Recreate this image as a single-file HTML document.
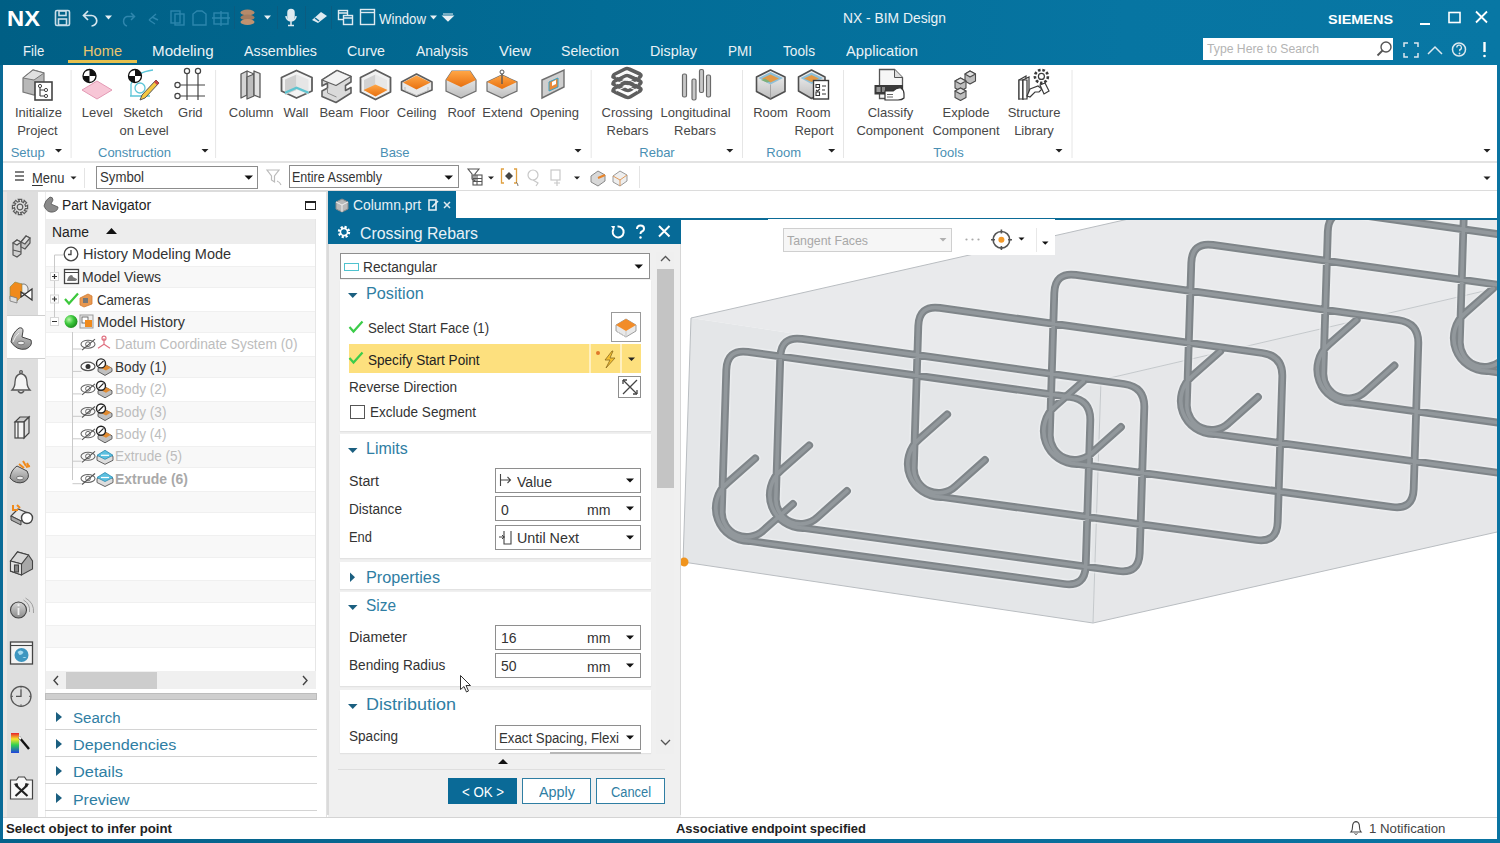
<!DOCTYPE html>
<html><head><meta charset="utf-8">
<style>
*{margin:0;padding:0;box-sizing:border-box}
html,body{width:1500px;height:843px;overflow:hidden;background:#fff;font-family:"Liberation Sans",sans-serif;color:#333}
.a{position:absolute}
.t{position:absolute;white-space:nowrap;line-height:1}
svg.a{overflow:hidden}








</style></head><body>
<div class="a" style="left:0.0px;top:0.0px;width:1500.0px;height:65.0px;background:linear-gradient(to right,#005f85 0%,#026c96 40%,#0775a2 75%,#0877a4 100%);"></div>
<div class="a" style="left:3.0px;top:65.0px;width:1494.0px;height:97.0px;background:#fff;"></div>
<div class="a" style="left:0.0px;top:65.0px;width:3.0px;height:778.0px;background:#0a6a96;"></div>
<div class="a" style="left:1497.0px;top:65.0px;width:3.0px;height:778.0px;background:#0a74a2;"></div>
<div class="a" style="left:0.0px;top:839.0px;width:1500.0px;height:4.0px;background:linear-gradient(to right,#05628a,#0a74a2);"></div>
<div class="a" style="left:3.0px;top:161.0px;width:1494.0px;height:2.0px;background:#e3e3e3;"></div>
<div class="a" style="left:3.0px;top:163.0px;width:1494.0px;height:27.0px;background:#fff;"></div>
<div class="a" style="left:3.0px;top:190.0px;width:1494.0px;height:2.0px;background:#dcdcdc;"></div>
<div class="a" style="left:3.0px;top:192.0px;width:34.0px;height:625.0px;background:#e4e4e4;"></div>
<div class="a" style="left:37.0px;top:192.0px;width:2.0px;height:623.0px;background:#d6d6d6;"></div>
<div class="a" style="left:39.0px;top:192.0px;width:287.0px;height:625.0px;background:#fff;"></div>
<div class="a" style="left:326.0px;top:192.0px;width:2.0px;height:623.0px;background:#e0e0e0;"></div>
<div class="a" style="left:328.0px;top:191.0px;width:128.0px;height:27.0px;background:#066a97;"></div>
<div class="a" style="left:456.0px;top:191.0px;width:1041.0px;height:27.0px;background:#fff;"></div>
<div class="a" style="left:328.0px;top:218.0px;width:353.0px;height:26.0px;background:#066a97;"></div>
<div class="a" style="left:328.0px;top:244.0px;width:353.0px;height:573.0px;background:#f0f0f0;"></div>
<div class="a" style="left:681.0px;top:218.0px;width:816.0px;height:2.0px;background:#0b6b97;"></div>
<div class="a" style="left:681.0px;top:220.0px;width:816.0px;height:597.0px;background:#fff;"></div>
<div class="a" style="left:3.0px;top:817.0px;width:1494.0px;height:22.0px;background:#fff;"></div>
<svg class="a" style="left:0;top:0" width="1500" height="843" viewBox="0 0 1500 843">
<defs><clipPath id="vp"><rect x="681" y="220" width="816" height="597"/></clipPath></defs>
<g clip-path="url(#vp)">
<polygon points="691,318 1133,218 1497,218 1497,288 1101,380" fill="#e9eaec"/>
<polygon points="691,318 1101,380 1093,623 683,562" fill="#e4e6e8"/>
<polygon points="1101,380 1497,288 1497,532 1093,623" fill="#e6e7e9"/>
<polyline points="1133,218 691,318 683,562 1093,623 1497,532" fill="none" stroke="#b9bdc1" stroke-width="1"/>
<polyline points="1101,380 1093,623" fill="none" stroke="#c4c8cb" stroke-width="1"/>
<polyline points="1101,380 1497,288" fill="none" stroke="#c4c8cb" stroke-width="1"/>

<path d="M1493.2,288.4 L1465.5,312.8 A33,33 0 0 0 1487.5,371.0 L1802.2,414.0 Q1823.0,417.0 1823.7,396.0 L1828.3,250.9 Q1829.0,230.0 1808.2,227.0 L1485.8,181.9 Q1465.0,179.0 1464.3,200.0 L1459.8,341.8 A24.7,24.7 0 0 0 1501.4,360.3 L1531.0,334.0 M1356.7,319.9 L1329.0,344.3 A33,33 0 0 0 1351.0,402.5 L1665.7,445.5 Q1686.5,448.5 1687.2,427.5 L1691.8,282.4 Q1692.5,261.5 1671.7,258.5 L1349.3,213.4 Q1328.5,210.5 1327.8,231.5 L1323.3,373.3 A24.7,24.7 0 0 0 1364.9,391.8 L1394.5,365.5 M1220.2,351.4 L1192.5,375.8 A33,33 0 0 0 1214.5,434.0 L1529.2,477.0 Q1550.0,480.0 1550.7,459.0 L1555.3,313.9 Q1556.0,293.0 1535.2,290.0 L1212.8,244.9 Q1192.0,242.0 1191.3,263.0 L1186.8,404.8 A24.7,24.7 0 0 0 1228.4,423.3 L1258.0,397.0 M1083.2,381.4 L1055.5,405.8 A33,33 0 0 0 1077.5,464.0 L1392.2,507.0 Q1413.0,510.0 1413.7,489.0 L1418.3,343.9 Q1419.0,323.0 1398.2,320.0 L1075.8,274.9 Q1055.0,272.0 1054.3,293.0 L1049.8,434.8 A24.7,24.7 0 0 0 1091.4,453.3 L1121.0,427.0 M947.2,414.4 L919.5,438.8 A33,33 0 0 0 941.5,497.0 L1256.2,540.0 Q1277.0,543.0 1277.7,522.0 L1282.3,376.9 Q1283.0,356.0 1262.2,353.0 L939.8,307.9 Q919.0,305.0 918.3,326.0 L913.8,467.8 A24.7,24.7 0 0 0 955.4,486.3 L985.0,460.0 M809.2,445.4 L781.5,469.8 A33,33 0 0 0 803.5,528.0 L1118.2,571.0 Q1139.0,574.0 1139.7,553.0 L1144.3,407.9 Q1145.0,387.0 1124.2,384.0 L801.8,338.9 Q781.0,336.0 780.3,357.0 L775.8,498.8 A24.7,24.7 0 0 0 817.4,517.3 L847.0,491.0 M755.2,458.4 L727.5,482.8 A33,33 0 0 0 749.5,541.0 L1064.2,584.0 Q1085.0,587.0 1085.7,566.0 L1090.3,420.9 Q1091.0,400.0 1070.2,397.0 L747.8,351.9 Q727.0,349.0 726.3,370.0 L721.8,511.8 A24.7,24.7 0 0 0 763.4,530.3 L793.0,504.0" fill="none" stroke="#eef0f1" stroke-width="11" stroke-linecap="round" stroke-linejoin="round" opacity="0.6"/>
<path d="M1493.2,288.4 L1465.5,312.8 A33,33 0 0 0 1487.5,371.0 L1802.2,414.0 Q1823.0,417.0 1823.7,396.0 L1828.3,250.9 Q1829.0,230.0 1808.2,227.0 L1485.8,181.9 Q1465.0,179.0 1464.3,200.0 L1459.8,341.8 A24.7,24.7 0 0 0 1501.4,360.3 L1531.0,334.0 M1356.7,319.9 L1329.0,344.3 A33,33 0 0 0 1351.0,402.5 L1665.7,445.5 Q1686.5,448.5 1687.2,427.5 L1691.8,282.4 Q1692.5,261.5 1671.7,258.5 L1349.3,213.4 Q1328.5,210.5 1327.8,231.5 L1323.3,373.3 A24.7,24.7 0 0 0 1364.9,391.8 L1394.5,365.5 M1220.2,351.4 L1192.5,375.8 A33,33 0 0 0 1214.5,434.0 L1529.2,477.0 Q1550.0,480.0 1550.7,459.0 L1555.3,313.9 Q1556.0,293.0 1535.2,290.0 L1212.8,244.9 Q1192.0,242.0 1191.3,263.0 L1186.8,404.8 A24.7,24.7 0 0 0 1228.4,423.3 L1258.0,397.0 M1083.2,381.4 L1055.5,405.8 A33,33 0 0 0 1077.5,464.0 L1392.2,507.0 Q1413.0,510.0 1413.7,489.0 L1418.3,343.9 Q1419.0,323.0 1398.2,320.0 L1075.8,274.9 Q1055.0,272.0 1054.3,293.0 L1049.8,434.8 A24.7,24.7 0 0 0 1091.4,453.3 L1121.0,427.0 M947.2,414.4 L919.5,438.8 A33,33 0 0 0 941.5,497.0 L1256.2,540.0 Q1277.0,543.0 1277.7,522.0 L1282.3,376.9 Q1283.0,356.0 1262.2,353.0 L939.8,307.9 Q919.0,305.0 918.3,326.0 L913.8,467.8 A24.7,24.7 0 0 0 955.4,486.3 L985.0,460.0 M809.2,445.4 L781.5,469.8 A33,33 0 0 0 803.5,528.0 L1118.2,571.0 Q1139.0,574.0 1139.7,553.0 L1144.3,407.9 Q1145.0,387.0 1124.2,384.0 L801.8,338.9 Q781.0,336.0 780.3,357.0 L775.8,498.8 A24.7,24.7 0 0 0 817.4,517.3 L847.0,491.0 M755.2,458.4 L727.5,482.8 A33,33 0 0 0 749.5,541.0 L1064.2,584.0 Q1085.0,587.0 1085.7,566.0 L1090.3,420.9 Q1091.0,400.0 1070.2,397.0 L747.8,351.9 Q727.0,349.0 726.3,370.0 L721.8,511.8 A24.7,24.7 0 0 0 763.4,530.3 L793.0,504.0" fill="none" stroke="#7f8589" stroke-width="7.8" stroke-linecap="round" stroke-linejoin="round"/>
<path d="M1493.2,288.4 L1465.5,312.8 A33,33 0 0 0 1487.5,371.0 L1802.2,414.0 Q1823.0,417.0 1823.7,396.0 L1828.3,250.9 Q1829.0,230.0 1808.2,227.0 L1485.8,181.9 Q1465.0,179.0 1464.3,200.0 L1459.8,341.8 A24.7,24.7 0 0 0 1501.4,360.3 L1531.0,334.0 M1356.7,319.9 L1329.0,344.3 A33,33 0 0 0 1351.0,402.5 L1665.7,445.5 Q1686.5,448.5 1687.2,427.5 L1691.8,282.4 Q1692.5,261.5 1671.7,258.5 L1349.3,213.4 Q1328.5,210.5 1327.8,231.5 L1323.3,373.3 A24.7,24.7 0 0 0 1364.9,391.8 L1394.5,365.5 M1220.2,351.4 L1192.5,375.8 A33,33 0 0 0 1214.5,434.0 L1529.2,477.0 Q1550.0,480.0 1550.7,459.0 L1555.3,313.9 Q1556.0,293.0 1535.2,290.0 L1212.8,244.9 Q1192.0,242.0 1191.3,263.0 L1186.8,404.8 A24.7,24.7 0 0 0 1228.4,423.3 L1258.0,397.0 M1083.2,381.4 L1055.5,405.8 A33,33 0 0 0 1077.5,464.0 L1392.2,507.0 Q1413.0,510.0 1413.7,489.0 L1418.3,343.9 Q1419.0,323.0 1398.2,320.0 L1075.8,274.9 Q1055.0,272.0 1054.3,293.0 L1049.8,434.8 A24.7,24.7 0 0 0 1091.4,453.3 L1121.0,427.0 M947.2,414.4 L919.5,438.8 A33,33 0 0 0 941.5,497.0 L1256.2,540.0 Q1277.0,543.0 1277.7,522.0 L1282.3,376.9 Q1283.0,356.0 1262.2,353.0 L939.8,307.9 Q919.0,305.0 918.3,326.0 L913.8,467.8 A24.7,24.7 0 0 0 955.4,486.3 L985.0,460.0 M809.2,445.4 L781.5,469.8 A33,33 0 0 0 803.5,528.0 L1118.2,571.0 Q1139.0,574.0 1139.7,553.0 L1144.3,407.9 Q1145.0,387.0 1124.2,384.0 L801.8,338.9 Q781.0,336.0 780.3,357.0 L775.8,498.8 A24.7,24.7 0 0 0 817.4,517.3 L847.0,491.0 M755.2,458.4 L727.5,482.8 A33,33 0 0 0 749.5,541.0 L1064.2,584.0 Q1085.0,587.0 1085.7,566.0 L1090.3,420.9 Q1091.0,400.0 1070.2,397.0 L747.8,351.9 Q727.0,349.0 726.3,370.0 L721.8,511.8 A24.7,24.7 0 0 0 763.4,530.3 L793.0,504.0" fill="none" stroke="#92989c" stroke-width="3.6" stroke-linecap="round" stroke-linejoin="round"/>
<circle cx="684" cy="562" r="4.5" fill="#f0941e"/>
</g></svg>
<div class="t" style="left:7.2px;top:7.5px;font-size:22.5px;color:#ffffff;font-weight:bold;transform:scaleX(1.056);transform-origin:0 0;">NX</div>
<svg class="a" style="left:0;top:0" width="470" height="33">
<g fill="none" stroke="#c9dde8" stroke-width="1.6">
<rect x="55.5" y="10.5" width="14" height="15" rx="1.5"/>
<rect x="59" y="11" width="7" height="4.5"/>
<rect x="58.5" y="19" width="8" height="6"/>
</g>
<path d="M88 11 L83.5 15.5 L88 20 M84 15.5 H91.5 A5.2 5.2 0 0 1 91.5 26" fill="none" stroke="#d6e6ee" stroke-width="1.7"/>
<path d="M105 15.5 h7 l-3.5 4z" fill="#e8f0f4"/>
<path d="M131 13 L134.5 16.5 L131 20 M134 16.5 H127 A5 5 0 0 0 127 26" fill="none" stroke="#2f86ad" stroke-width="1.5"/>
<g fill="none" stroke="#2c86ad" stroke-width="1.4">
<path d="M149 20 l7 -6 M149 20 l6 4 M152 17 l6 3"/>
<rect x="171" y="11" width="9" height="12"/><rect x="175" y="14" width="9" height="11"/>
<path d="M193 25 v-11 l4 -3 h5 l4 3 v11z"/>
<rect x="214" y="13" width="14" height="11"/><path d="M221 11 v15 M212 18 h18"/>
</g>
<line x1="234.5" y1="6" x2="234.5" y2="29" stroke="#0b5c80" stroke-width="1"/>
<g fill="#b68a6a"><ellipse cx="247.5" cy="12.5" rx="7" ry="3"/><ellipse cx="247.5" cy="17.5" rx="7" ry="3" fill="#a47c60"/><ellipse cx="247.5" cy="22" rx="7" ry="3" fill="#c19270"/></g>
<path d="M264 15.5 h7 l-3.5 4z" fill="#e8f0f4"/>
<line x1="277.5" y1="6" x2="277.5" y2="29" stroke="#0b5c80" stroke-width="1"/>
<g fill="none" stroke="#dfeaf0" stroke-width="1.5"><rect x="288" y="9.5" width="6" height="11" rx="3" fill="#dfeaf0"/><path d="M286 16 a5 5 0 0 0 10 0 M291 21 v4 M288 25.5 h6"/></g>
<line x1="305.5" y1="6" x2="305.5" y2="29" stroke="#0b5c80" stroke-width="1"/>
<path d="M312 20 l9 -8 l6 4 l-9 7z" fill="#dfeaf0"/><path d="M315 18 l4 3" stroke="#0a6a96" stroke-width="1.5"/>
<line x1="331.5" y1="6" x2="331.5" y2="29" stroke="#0b5c80" stroke-width="1"/>
<g fill="none" stroke="#dfeaf0" stroke-width="1.4"><rect x="338.5" y="10.5" width="9" height="9"/><rect x="343.5" y="15.5" width="9" height="9" fill="#086c98"/><path d="M343.5 18 h9 M338.5 13 h9"/>
<rect x="360.5" y="9.5" width="14" height="15"/><path d="M360.5 12.5 h14"/></g>
<path d="M430 15.5 h7 l-3.5 4z" fill="#e8f0f4"/>
<path d="M443 14 h10 M443 16 h10 l-5 5z" stroke="#e8f0f4" stroke-width="1.2" fill="#e8f0f4"/>
</svg>
<div class="t" style="left:379.0px;top:11.6px;font-size:14.0px;color:#eaf2f6;font-weight:normal;transform:scaleX(0.944);transform-origin:0 0;">Window</div>
<div class="t" style="left:843.3px;top:11.2px;font-size:14.5px;color:#eaf2f6;font-weight:normal;transform:scaleX(0.954);transform-origin:0 0;">NX - BIM Design</div>
<div class="t" style="left:1328.0px;top:12.6px;font-size:13.5px;color:#ffffff;font-weight:bold;transform:scaleX(1.070);transform-origin:0 0;">SIEMENS</div>
<svg class="a" style="left:1410px;top:5px" width="90" height="25">
<path d="M10 19 h10" stroke="#fff" stroke-width="2"/>
<rect x="39" y="7.5" width="11" height="10" fill="none" stroke="#fff" stroke-width="1.6"/>
<path d="M66 6.5 l11 11 M77 6.5 l-11 11" stroke="#fff" stroke-width="1.8"/>
</svg>
<div class="t" style="left:22.5px;top:43.0px;font-size:15.0px;color:#eaf2f6;font-weight:normal;transform:scaleX(0.877);transform-origin:0 0;">File</div>
<div class="t" style="left:83.0px;top:43.0px;font-size:15.0px;color:#e9c56f;font-weight:normal;transform:scaleX(0.975);transform-origin:0 0;">Home</div>
<div class="t" style="left:152.3px;top:43.0px;font-size:15.0px;color:#eaf2f6;font-weight:normal;transform:scaleX(1.012);transform-origin:0 0;">Modeling</div>
<div class="t" style="left:244.0px;top:43.0px;font-size:15.0px;color:#eaf2f6;font-weight:normal;transform:scaleX(0.952);transform-origin:0 0;">Assemblies</div>
<div class="t" style="left:347.0px;top:43.0px;font-size:15.0px;color:#eaf2f6;font-weight:normal;transform:scaleX(0.950);transform-origin:0 0;">Curve</div>
<div class="t" style="left:416.0px;top:43.0px;font-size:15.0px;color:#eaf2f6;font-weight:normal;transform:scaleX(0.931);transform-origin:0 0;">Analysis</div>
<div class="t" style="left:499.0px;top:43.0px;font-size:15.0px;color:#eaf2f6;font-weight:normal;transform:scaleX(0.993);transform-origin:0 0;">View</div>
<div class="t" style="left:561.0px;top:43.0px;font-size:15.0px;color:#eaf2f6;font-weight:normal;transform:scaleX(0.940);transform-origin:0 0;">Selection</div>
<div class="t" style="left:650.0px;top:43.0px;font-size:15.0px;color:#eaf2f6;font-weight:normal;transform:scaleX(0.956);transform-origin:0 0;">Display</div>
<div class="t" style="left:728.0px;top:43.0px;font-size:15.0px;color:#eaf2f6;font-weight:normal;transform:scaleX(0.900);transform-origin:0 0;">PMI</div>
<div class="t" style="left:783.0px;top:43.0px;font-size:15.0px;color:#eaf2f6;font-weight:normal;transform:scaleX(0.914);transform-origin:0 0;">Tools</div>
<div class="t" style="left:846.0px;top:43.0px;font-size:15.0px;color:#eaf2f6;font-weight:normal;transform:scaleX(0.981);transform-origin:0 0;">Application</div>
<div class="a" style="left:67.5px;top:60.0px;width:69.5px;height:3.0px;background:#e5c04e;"></div>
<div class="a" style="left:1203.0px;top:38.0px;width:190.0px;height:22.0px;background:#fff;"></div>
<div class="t" style="left:1207.0px;top:43.4px;font-size:12.5px;color:#b4b4b4;font-weight:normal;transform:scaleX(0.977);transform-origin:0 0;">Type Here to Search</div>
<svg class="a" style="left:1370px;top:38px" width="130" height="25">
<circle cx="16" cy="9" r="5" fill="none" stroke="#555" stroke-width="1.4"/><path d="M12.5 12.5 l-5 5" stroke="#555" stroke-width="1.8"/>
<g fill="none" stroke="#dbe8ef" stroke-width="1.5">
<path d="M34 9 v-4 h4 M44 5 h4 v4 M48 15 v4 h-4 M38 19 h-4 v-4"/>
<path d="M58 16 l7 -7 l7 7"/>
<circle cx="89" cy="11.5" r="6.5"/><path d="M86.8 9.5 a2.3 2.3 0 1 1 3 2.2 v1.5" stroke-width="1.3"/>
</g>
<circle cx="89.5" cy="15.5" r="0.9" fill="#dbe8ef"/>
<path d="M114.5 4 v10" stroke="#fff" stroke-width="2.4"/><circle cx="114.5" cy="18" r="1.3" fill="#fff"/>
</svg>
<div class="t" style="left:38.4px;top:106.3px;width:120px;margin-left:-60px;text-align:center;font-size:13.0px;color:#474747">Initialize</div>
<div class="t" style="left:37.4px;top:123.9px;width:120px;margin-left:-60px;text-align:center;font-size:13.0px;color:#474747">Project</div>
<div class="t" style="left:97.4px;top:106.3px;width:120px;margin-left:-60px;text-align:center;font-size:13.0px;color:#474747">Level</div>
<div class="t" style="left:143.0px;top:106.3px;width:120px;margin-left:-60px;text-align:center;font-size:13.0px;color:#474747">Sketch</div>
<div class="t" style="left:144.2px;top:123.9px;width:120px;margin-left:-60px;text-align:center;font-size:13.0px;color:#474747">on Level</div>
<div class="t" style="left:190.3px;top:106.3px;width:120px;margin-left:-60px;text-align:center;font-size:13.0px;color:#474747">Grid</div>
<div class="t" style="left:251.2px;top:106.3px;width:120px;margin-left:-60px;text-align:center;font-size:13.0px;color:#474747">Column</div>
<div class="t" style="left:296.0px;top:106.3px;width:120px;margin-left:-60px;text-align:center;font-size:13.0px;color:#474747">Wall</div>
<div class="t" style="left:336.4px;top:106.3px;width:120px;margin-left:-60px;text-align:center;font-size:13.0px;color:#474747">Beam</div>
<div class="t" style="left:374.5px;top:106.3px;width:120px;margin-left:-60px;text-align:center;font-size:13.0px;color:#474747">Floor</div>
<div class="t" style="left:416.7px;top:106.3px;width:120px;margin-left:-60px;text-align:center;font-size:13.0px;color:#474747">Ceiling</div>
<div class="t" style="left:461.2px;top:106.3px;width:120px;margin-left:-60px;text-align:center;font-size:13.0px;color:#474747">Roof</div>
<div class="t" style="left:502.5px;top:106.3px;width:120px;margin-left:-60px;text-align:center;font-size:13.0px;color:#474747">Extend</div>
<div class="t" style="left:554.5px;top:106.3px;width:120px;margin-left:-60px;text-align:center;font-size:13.0px;color:#474747">Opening</div>
<div class="t" style="left:627.2px;top:106.3px;width:120px;margin-left:-60px;text-align:center;font-size:13.0px;color:#474747">Crossing</div>
<div class="t" style="left:627.5px;top:123.9px;width:120px;margin-left:-60px;text-align:center;font-size:13.0px;color:#474747">Rebars</div>
<div class="t" style="left:695.5px;top:106.3px;width:120px;margin-left:-60px;text-align:center;font-size:13.0px;color:#474747">Longitudinal</div>
<div class="t" style="left:695.0px;top:123.9px;width:120px;margin-left:-60px;text-align:center;font-size:13.0px;color:#474747">Rebars</div>
<div class="t" style="left:770.5px;top:106.3px;width:120px;margin-left:-60px;text-align:center;font-size:13.0px;color:#474747">Room</div>
<div class="t" style="left:813.3px;top:106.3px;width:120px;margin-left:-60px;text-align:center;font-size:13.0px;color:#474747">Room</div>
<div class="t" style="left:814.0px;top:123.9px;width:120px;margin-left:-60px;text-align:center;font-size:13.0px;color:#474747">Report</div>
<div class="t" style="left:890.5px;top:106.3px;width:120px;margin-left:-60px;text-align:center;font-size:13.0px;color:#474747">Classify</div>
<div class="t" style="left:890.0px;top:123.9px;width:120px;margin-left:-60px;text-align:center;font-size:13.0px;color:#474747">Component</div>
<div class="t" style="left:966.0px;top:106.3px;width:120px;margin-left:-60px;text-align:center;font-size:13.0px;color:#474747">Explode</div>
<div class="t" style="left:966.0px;top:123.9px;width:120px;margin-left:-60px;text-align:center;font-size:13.0px;color:#474747">Component</div>
<div class="t" style="left:1034.0px;top:106.3px;width:120px;margin-left:-60px;text-align:center;font-size:13.0px;color:#474747">Structure</div>
<div class="t" style="left:1034.0px;top:123.9px;width:120px;margin-left:-60px;text-align:center;font-size:13.0px;color:#474747">Library</div>
<div class="t" style="left:27.7px;top:145.5px;width:120px;margin-left:-60px;text-align:center;font-size:13.0px;color:#4a8fb3">Setup</div>
<div class="t" style="left:134.5px;top:145.5px;width:120px;margin-left:-60px;text-align:center;font-size:13.0px;color:#4a8fb3">Construction</div>
<div class="t" style="left:394.8px;top:145.5px;width:120px;margin-left:-60px;text-align:center;font-size:13.0px;color:#4a8fb3">Base</div>
<div class="t" style="left:657.0px;top:145.5px;width:120px;margin-left:-60px;text-align:center;font-size:13.0px;color:#4a8fb3">Rebar</div>
<div class="t" style="left:783.7px;top:145.5px;width:120px;margin-left:-60px;text-align:center;font-size:13.0px;color:#4a8fb3">Room</div>
<div class="t" style="left:948.5px;top:145.5px;width:120px;margin-left:-60px;text-align:center;font-size:13.0px;color:#4a8fb3">Tools</div>
<svg class="a" style="left:0;top:64px" width="1500" height="100"><line x1="71.1" y1="6" x2="71.1" y2="94" stroke="#e6e6e6" stroke-width="1"/><line x1="215.6" y1="6" x2="215.6" y2="94" stroke="#e6e6e6" stroke-width="1"/><line x1="591.2" y1="6" x2="591.2" y2="94" stroke="#e6e6e6" stroke-width="1"/><line x1="742.5" y1="6" x2="742.5" y2="94" stroke="#e6e6e6" stroke-width="1"/><line x1="843.5" y1="6" x2="843.5" y2="94" stroke="#e6e6e6" stroke-width="1"/><line x1="1072.0" y1="6" x2="1072.0" y2="94" stroke="#e6e6e6" stroke-width="1"/><path d="M55.0 85 h7 l-3.5 3.5z" fill="#222"/><path d="M201.5 85 h7 l-3.5 3.5z" fill="#222"/><path d="M574.5 85 h7 l-3.5 3.5z" fill="#222"/><path d="M726.3 85 h7 l-3.5 3.5z" fill="#222"/><path d="M828.2 85 h7 l-3.5 3.5z" fill="#222"/><path d="M1055.5 85 h7 l-3.5 3.5z" fill="#222"/><path d="M1483.5 85 h7 l-3.5 3.5z" fill="#222"/></svg>
<svg class="a" style="left:0;top:0" width="1100" height="110">
<defs>
<linearGradient id="gw" x1="0" y1="0" x2="0" y2="1"><stop offset="0" stop-color="#f4f4f4"/><stop offset="1" stop-color="#bdbdbd"/></linearGradient>
<linearGradient id="go" x1="0" y1="0" x2="0" y2="1"><stop offset="0" stop-color="#ffa646"/><stop offset="1" stop-color="#e8700f"/></linearGradient>
</defs>
<!-- initialize project -->
<path d="M23 78 l10 -8 l11 3 v14 l-10 8 l-11 -3z" fill="#b8b8b8" stroke="#777" stroke-width="1.2"/>
<path d="M23 78 l10 -8 l11 3 l-10 7z" fill="#e0e0e0" stroke="#777" stroke-width="1"/>
<rect x="35" y="82" width="17" height="18" fill="#fff" stroke="#444" stroke-width="1.6"/>
<path d="M40 86 v10 M40 90 h5 M40 96 h5" stroke="#444" stroke-width="1.2" fill="none"/>
<circle cx="40" cy="86" r="1.6" fill="#fff" stroke="#444"/><circle cx="46" cy="90" r="1.6" fill="#fff" stroke="#444"/><circle cx="46" cy="96" r="1.6" fill="#fff" stroke="#444"/>
<!-- level -->
<path d="M82 90 l15 -9 l15 9 l-15 9z" fill="#f7c6d6" stroke="#e49ab5" stroke-width="1"/>
<circle cx="89.5" cy="76" r="6.5" fill="#fff" stroke="#111" stroke-width="1.3"/>
<path d="M89.5 69.5 A6.5 6.5 0 0 1 96 76 H89.5z M89.5 82.5 A6.5 6.5 0 0 1 83 76 H89.5z" fill="#111"/>
<!-- sketch on level -->
<path d="M131 84 q5 -12 22 -14 M130 96 h20 M131 84 v12" fill="none" stroke="#5cc5d8" stroke-width="1.3"/>
<circle cx="140" cy="88" r="5" fill="none" stroke="#5cc5d8" stroke-width="1.3"/>
<circle cx="135" cy="76" r="6.5" fill="#fff" stroke="#111" stroke-width="1.3"/>
<path d="M135 69.5 A6.5 6.5 0 0 1 141.5 76 H135z M135 82.5 A6.5 6.5 0 0 1 128.5 76 H135z" fill="#111"/>
<path d="M156 80 l3 3 l-14 15 l-5 2 l2 -5z" fill="#f5c842" stroke="#555" stroke-width="1"/>
<path d="M156 80 l3 3 l-2 2 l-3 -3z" fill="#c44"/>
<!-- grid -->
<g stroke="#444" stroke-width="1.2" fill="#fff">
<path d="M187 74 v26 M198 74 v26 M180 85 h25 M180 96 h25"/>
<circle cx="187" cy="71" r="2.6"/><circle cx="198" cy="71" r="2.6"/><circle cx="177.5" cy="85" r="2.6"/><circle cx="177.5" cy="96" r="2.6"/>
</g>
<!-- column -->
<g stroke="#5a5a5a" stroke-width="1.3" stroke-linejoin="round">
<path d="M241 74 l6 -3 v24 l-6 3z" fill="#d4d4d4"/>
<path d="M247 77 l7 -3 v22 l-7 3z" fill="#bdbdbd"/>
<path d="M254 71 l6 2.5 v24 l-6 -2.5z" fill="#e2e2e2"/>
<path d="M247 71 l7 3" fill="none"/>
</g>
<!-- wall -->
<path d="M281.5 77.5 l15 -7 l15.5 7 v13.5 l-15.5 7 l-15 -7z" fill="#f4f4f4" stroke="#5e5e5e" stroke-width="1.8" stroke-linejoin="round"/>
<path d="M285 79.5 l11.5 -5 v15.5 l-11.5 5z" fill="#cfcfcf"/>
<path d="M296.5 74.5 l12 5 v15 l-12 -5z" fill="#e6e6e6"/>
<path d="M285 91.5 l11.5 -5 l12 5 v2.5 l-12 -5 l-11.5 5z" fill="#5fc4d0"/>
<!-- beam -->
<path d="M322 80 l15 -9.5 l14 6 v5.5 l-5.5 3.5 v5 l5.5 -3 v5.5 l-15 9.5 l-14 -6 v-5.5 l5.5 -3 v-5 l-5.5 3z" fill="#dadada" stroke="#5e5e5e" stroke-width="1.6" stroke-linejoin="round"/>
<path d="M322 80 l15 -9.5 l14 6 l-15 9z" fill="#f2f2f2" stroke="#5e5e5e" stroke-width="1.2" stroke-linejoin="round"/>
<path d="M327.5 88 v5 l9 4" fill="none" stroke="#8a8a8a" stroke-width="1"/>
<!-- floor -->
<path d="M360.5 77.5 l15 -7.5 l15 7.5 v14.5 l-15 7.5 l-15 -7.5z" fill="#f2f2f2" stroke="#5e5e5e" stroke-width="1.8" stroke-linejoin="round"/>
<path d="M364 80 l11.5 -5.5 v12 l-11.5 5z" fill="#d2d2d2"/><path d="M375.5 74.5 l11.5 5.5 v11.5 l-11.5 -5z" fill="#e8e8e8"/>
<path d="M363.5 90 l12 -5.5 l12 5.5 l-12 6.5z" fill="url(#go)"/>
<!-- ceiling -->
<path d="M401.5 82 l15 -8 l15.5 8 v8 l-15.5 6.5 l-15 -6.5z" fill="#e8e8e8" stroke="#5e5e5e" stroke-width="1.6" stroke-linejoin="round"/>
<path d="M403 82.5 l13.5 -7 l14 7 l-14 7z" fill="url(#go)"/>
<path d="M405 87 v3.5 l11.5 5 M428 87 v3.5 l-11.5 5" fill="none" stroke="#bbb" stroke-width="1"/>
<!-- roof -->
<path d="M446 80 l6 -9 h18 l6 9 v11 l-15 7 l-15 -7z" fill="url(#gw)" stroke="#6f6f6f" stroke-width="1.2"/>
<path d="M446 80 l6 -9 h18 l6 9 l-15 7z" fill="url(#go)"/>
<!-- extend -->
<path d="M487 82 l15 -7 l15 7 v9 l-15 7 l-15 -7z" fill="url(#gw)" stroke="#6f6f6f" stroke-width="1.2"/>
<path d="M487 82 l15 -7 l15 7 l-15 7z" fill="url(#go)"/>
<path d="M502 72 v12" stroke="#555" stroke-width="1.3"/><circle cx="502" cy="72" r="2" fill="#fff" stroke="#555"/>
<!-- opening -->
<path d="M542 80 l22 -10 v17 l-22 11z" fill="#cfcfcf" stroke="#6f6f6f" stroke-width="1.4"/>
<path d="M549 82 l9 -4 v9 l-9 4z" fill="#e88a3a" stroke="#3aa3c5" stroke-width="1"/>
<path d="M552 82 l4 -2 v4 l-4 2z" fill="#fff"/>
<!-- crossing rebars -->
<g fill="none" stroke-linejoin="round">
<path d="M613 91 q0 -2 2 -3 l10 -5 q2 -1 4 0 l11 5 q2 1 0 3 l-10 6 q-2 1 -4 0 l-11 -5z" stroke="#5e5e5e" stroke-width="3.6"/>
<path d="M613 84 q0 -2 2 -3 l10 -5 q2 -1 4 0 l11 5 q2 1 0 3 l-10 6 q-2 1 -4 0 l-11 -5z" stroke="#5e5e5e" stroke-width="3.6"/>
<path d="M613 77 q0 -2 2 -3 l10 -5 q2 -1 4 0 l11 5 q2 1 0 3 l-10 6 q-2 1 -4 0 l-11 -5z" stroke="#5e5e5e" stroke-width="3.6"/>
<path d="M616 91 l11 -5 l11 5 M616 84 l11 -5 l11 5 M616 77 l11 -5 l11 5" stroke="#f4f4f4" stroke-width="1.1"/>
</g>
<!-- longitudinal -->
<g fill="#c8c8c8" stroke="#6a6a6a" stroke-width="1.2">
<rect x="682.5" y="74" width="4" height="23" rx="1.5"/><rect x="692" y="79" width="4" height="21" rx="1.5"/><rect x="699.5" y="69.5" width="4" height="23" rx="1.5"/><rect x="706.5" y="75" width="4" height="22" rx="1.5"/>
</g>
<!-- room -->
<path d="M756.5 77 l14 -7 l14.5 7 v14.5 l-14.5 7.5 l-14 -7.5z" fill="url(#gw)" stroke="#505050" stroke-width="1.6" stroke-linejoin="round"/>
<path d="M758.5 78 l12 -6 l12.5 6 l-12.5 6.5z" fill="#8fc0d8"/>
<path d="M762 78.5 l8.5 -4 l8.5 4 l-8.5 4z" fill="#e39a48"/><path d="M761 80 l4 -1.5 l5 3 l-3 1z" fill="#7fb07a"/>
<path d="M770.5 84.5 v14" stroke="#999" stroke-width="0.8"/>
<!-- room report -->
<path d="M798.5 77 l13 -7 l13.5 7 v14 l-13.5 7.5 l-13 -7.5z" fill="url(#gw)" stroke="#505050" stroke-width="1.6" stroke-linejoin="round"/>
<path d="M800.5 78 l11 -5.5 l11.5 5.5 l-11.5 6z" fill="#8fc0d8"/>
<path d="M804 78.5 l7.5 -3.5 l7.5 3.5 l-7.5 3.5z" fill="#e39a48"/>
<rect x="813.5" y="80.5" width="15" height="18.5" fill="#fff" stroke="#3a3a3a" stroke-width="1.4"/>
<path d="M816 84.5 h3.5 v3 h-3.5z M816 92 h3.5 v3.5 h-3.5z" fill="none" stroke="#333" stroke-width="1.1"/>
<path d="M816 90 l1.5 1.2 l2.5 -2.5 M822 86 h4 M822 90 h3 M822 94 h4" stroke="#333" stroke-width="1.2" fill="none"/>
<!-- classify -->
<path d="M879.5 69.5 h15 l8 8 v21 h-23z" fill="#f6f6f6" stroke="#555" stroke-width="1.3"/>
<path d="M894.5 69.5 v8 h8" fill="#ddd" stroke="#555" stroke-width="1"/>
<rect x="874.5" y="85" width="28.5" height="9.5" fill="#3a3a3a"/>
<rect x="876.5" y="87" width="4" height="5" fill="#999"/><rect x="882" y="87" width="3" height="5" fill="#888"/>
<path d="M885 91 h8 q4 -4 8 -3 q3 2 3 6 v4 q-2 2 -6 2 h-13z" fill="#fff" stroke="#333" stroke-width="1.2"/>
<path d="M887 94.5 h6 M887 97 h6" stroke="#555" stroke-width="0.9"/>
<!-- explode -->
<g stroke="#4a4a4a" stroke-width="1.1" stroke-linejoin="round">
<path d="M965 74 l5 -3 l5.5 3 v7 l-5.5 3 l-5 -3z" fill="#bdbdbd"/><path d="M965 74 l5 -3 l5.5 3 l-5.5 3z" fill="#e0e0e0"/>
<path d="M955 81 l5.5 -3 l5.5 3 v7 l-5.5 3 l-5.5 -3z" fill="#bdbdbd"/><path d="M955 81 l5.5 -3 l5.5 3 l-5.5 3z" fill="#e0e0e0"/>
<path d="M955 91 l5.5 -3 l5.5 3 v6.5 l-5.5 3 l-5.5 -3z" fill="#bdbdbd"/><path d="M955 91 l5.5 -3 l5.5 3 l-5.5 3z" fill="#e0e0e0"/>
</g>
<!-- structure library -->
<g fill="#fff" stroke="#3a3a3a" stroke-width="1.2">
<path d="M1019 80 l7 -4 v19 l-7 4z" fill="#eee"/><path d="M1019 80 h4 v19 h-4z"/><path d="M1023 80 l6 -3 v19 l-6 3z"/><path d="M1023 80 h4 v19 h-4z"/>
<path d="M1030 89 l8 -3 l4 3 l-3 3 l-4 0 l-5 5 l-3 -1z"/><path d="M1040 85 l5 -2 l4 8 l-5 3z"/>
<circle cx="1041.4" cy="76.4" r="6.5" stroke-width="2.6" stroke-dasharray="2.6 1.8"/><circle cx="1041.4" cy="76.4" r="3"/>
</g>
</svg>
<div class="t" style="left:31.6px;top:170.5px;font-size:14.0px;color:#333;font-weight:normal;transform:scaleX(0.925);transform-origin:0 0;"><u style="text-decoration-thickness:1px;text-underline-offset:2px">M</u>enu</div>
<div class="a" style="left:96.0px;top:165.5px;width:162.0px;height:23.0px;background:#fff;border:1px solid #8c8c8c"></div>
<div class="t" style="left:99.5px;top:170.3px;font-size:14.0px;color:#333;font-weight:normal;transform:scaleX(0.943);transform-origin:0 0;">Symbol</div>
<div class="a" style="left:289.0px;top:165.0px;width:169.5px;height:23.0px;background:#fff;border:1px solid #8c8c8c"></div>
<div class="t" style="left:292.0px;top:170.3px;font-size:14.0px;color:#333;font-weight:normal;transform:scaleX(0.896);transform-origin:0 0;">Entire Assembly</div>
<svg class="a" style="left:0;top:160px" width="700" height="32">
<path d="M15 12 h9 M15 16 h9 M15 20 h9" stroke="#555" stroke-width="1.3"/>
<path d="M70.5 16.5 h6 l-3 3z" fill="#222"/>
<line x1="84.5" y1="8" x2="84.5" y2="28" stroke="#e4e4e4"/>
<path d="M244.5 15.5 h8.5 l-4.25 4.25z" fill="#111"/>
<path d="M444.5 15.5 h8.5 l-4.25 4.25z" fill="#111"/>
<path d="M267 10 h12 l-4.5 6 v6 l-3 -2 v-4z" fill="none" stroke="#bbb" stroke-width="1.2"/>
<path d="M277 21 q3 1 4 4" fill="none" stroke="#bbb" stroke-width="1.1"/>
<g fill="none" stroke="#555" stroke-width="1.1">
<path d="M468 9 h11 l-4 5 v7 l-3 -2 v-5z"/><rect x="473" y="15" width="9" height="10"/><path d="M473 18.5 h9 M473 21.5 h9 M477 15 v10"/>
</g>
<path d="M488 16.5 h6 l-3 3z" fill="#222"/>
<path d="M504 9 h-2.5 v14 h2.5 M514 9 h2.5 v14 h-2.5" fill="none" stroke="#e0a040" stroke-width="1.3"/>
<path d="M509 12 l4 4 l-4 4 l-4 -4z" fill="#444"/><path d="M516 22 q2 1 2 4" stroke="#777" fill="none"/>
<g fill="none" stroke="#c8c8c8" stroke-width="1.2"><circle cx="533" cy="15" r="5"/><path d="M533 20 l5 3 l-2 3"/>
<rect x="551" y="10" width="9" height="10"/><path d="M557 20 v6 M554 23 h6"/></g>
<path d="M574 16.5 h6 l-3 3z" fill="#222"/>
<path d="M591 16 l7 -5 l7 4 v6 l-7 5 l-7 -4z" fill="#d8d8d8" stroke="#888" stroke-width="1"/><path d="M598 18 l7 -3" stroke="#e8842a" stroke-width="2"/>
<path d="M613 16 l7 -5 l7 4 v6 l-7 5 l-7 -4z" fill="#eee" stroke="#999" stroke-width="1"/><path d="M613 16 l7 4 l7 -5 M620 20 v6" stroke="#e09a5a" fill="none" stroke-width="1"/>
<line x1="639.5" y1="6" x2="639.5" y2="28" stroke="#e4e4e4"/>
</svg>
<svg class="a" style="left:1480px;top:174px" width="14" height="10"><path d="M3.5 2.5 h7 l-3.5 3.5z" fill="#222"/></svg>
<div class="a" style="left:3.0px;top:192.0px;width:4.0px;height:625.0px;background:#ebe6e3;"></div>
<div class="a" style="left:7.0px;top:192.0px;width:31.0px;height:625.0px;background:#dedede;"></div>
<div class="a" style="left:38.0px;top:192.0px;width:7.0px;height:625.0px;background:#fff;"></div>
<div class="a" style="left:45.0px;top:192.0px;width:1.0px;height:625.0px;background:#ececec;"></div>
<div class="a" style="left:7.0px;top:315.0px;width:38.0px;height:44.0px;background:#fff;border-top:1px solid #cfcfcf;border-bottom:1px solid #cfcfcf"></div>
<svg class="a" style="left:0;top:0" width="46" height="815"><defs><linearGradient id="rb" x1="0" y1="0" x2="0" y2="1"><stop offset="0" stop-color="#e8202a"/><stop offset="0.3" stop-color="#f5e52a"/><stop offset="0.6" stop-color="#2fd050"/><stop offset="1" stop-color="#2040e0"/></linearGradient><linearGradient id="gg" x1="0" y1="0" x2="0" y2="1"><stop offset="0" stop-color="#d8d8d8"/><stop offset="1" stop-color="#8a8a8a"/></linearGradient></defs><g transform="translate(20,207)" fill="none" stroke="#5a5a5a" stroke-width="1.2"><polygon points="7.61,-1.70 7.61,1.70 5.35,1.65 4.32,3.56 6.59,4.18 4.18,6.59 2.61,4.95 0.53,5.57 1.70,7.61 -1.70,7.61 -1.65,5.35 -3.56,4.32 -4.18,6.59 -6.59,4.18 -4.95,2.61 -5.57,0.53 -7.61,1.70 -7.61,-1.70 -5.35,-1.65 -4.32,-3.56 -6.59,-4.18 -4.18,-6.59 -2.61,-4.95 -0.53,-5.57 -1.70,-7.61 1.70,-7.61 1.65,-5.35 3.56,-4.32 4.18,-6.59 6.59,-4.18 4.95,-2.61 5.57,-0.53"/><circle r="2.8"/></g><g transform="translate(21,247)" stroke="#555" stroke-width="1.2" fill="#e2e2e2"><path d="M-8 -4 l4 -3 l4 2 v12 l-4 3 l-4 -2z" fill="#d0d0d0"/><path d="M-8 -4 l4 -3 l4 2 l-4 3z"/><path d="M0 -5 l5 -6 l4 2 v5 l-5 6 l-4 -2z" fill="#c8c8c8"/><path d="M0 -5 l5 -6 l4 2 l-5 6z"/><path d="M-8 3 l8 2" /></g><g transform="translate(21,292)"><path d="M-2 -6 a5 5 0 0 1 9 2 v6 l-9 -2z" fill="#eee" stroke="#777"/><path d="M-11 -5 l5 -5 l7 2 v12 l-5 5 l-7 -2z" fill="#f08a1c" stroke="#884" stroke-width="0.6"/><path d="M-11 4 l7 2 v5 l-7 -2z" fill="#ddd" stroke="#777" stroke-width="0.8"/><path d="M0 0 l11 8 v-11 l-11 8 z" fill="#fff" stroke="#333" stroke-width="1.2"/></g><g transform="translate(22,338)"><path d="M-11 4 q1 -9 8 -14 q4 -1 4 3 l-1 6 l9 3 q2 6 -5 9 q-9 2 -15 -7z" fill="url(#gg)" stroke="#444" stroke-width="1"/><path d="M-9 4 q2 -6 6 -9" fill="none" stroke="#eee" stroke-width="1"/><ellipse cx="-1" cy="5" rx="3.5" ry="1.8" fill="#f0f0f0" stroke="#555" stroke-width="0.7"/></g><g transform="translate(21,382)" fill="#f4f4f4" stroke="#555" stroke-width="1.3"><path d="M-9 8 q3 -3 3 -8 q0 -7 6 -8.5 q6 1.5 6 8.5 q0 5 3 8z"/><path d="M-3 9 q3 4 6 0" fill="none"/><circle cx="0" cy="-10" r="1.3"/></g><g transform="translate(22,428)" fill="#f4f4f4" stroke="#444" stroke-width="1.2"><path d="M-7 -6 l5 -5 h9 l-5 5z" fill="#ccc"/><path d="M2 -6 l5 -5 v16 l-5 5z" fill="#ddd"/><rect x="-7" y="-6" width="9" height="16"/><path d="M-4 -6 v16"/></g><g transform="translate(21,473)"><path d="M-11 5 q1 -8 7 -12 l10 5 q4 7 -3 11 q-8 3 -14 -4z" fill="url(#gg)" stroke="#444" stroke-width="1"/><ellipse cx="-1" cy="5" rx="3.5" ry="1.8" fill="#eee" stroke="#555" stroke-width="0.7"/><path d="M-2 -9 l5 4 M2 -12 l3 5 M6 -10 l2 4 M9 -7 l-4 1" stroke="#f08a1c" stroke-width="2"/></g><g transform="translate(21,517)"><path d="M-10 -1 l7 -7 l10 4 l-7 8z" fill="#e8e8e8" stroke="#444" stroke-width="1.1"/><path d="M-10 -1 v4 l10 5 v-4z" fill="#aaa" stroke="#444" stroke-width="1"/><circle cx="6" cy="1" r="5.5" fill="#fff" stroke="#444" stroke-width="1.4"/><path d="M-8 -12 v5 h5 M-4 -12 l3 3" stroke="#f08a1c" stroke-width="2" fill="none"/></g><g transform="translate(21.5,562)" stroke="#444" stroke-width="1.1"><path d="M-11 -1 l7 -9 l11 3 l4 6 v8 l-11 6 l-11 -4z" fill="#a8a8a8"/><path d="M-11 -1 l7 -9 l11 3 l-7 9z" fill="#d8d8d8"/><path d="M-11 -1 l11 3 v11 l-11 -4z" fill="#e4e4e4"/><rect x="-7" y="3" width="4" height="7" fill="#888"/></g><g transform="translate(18.5,610)"><circle r="8" fill="url(#gg)" stroke="#444" stroke-width="1.1"/><path d="M0 -2 v7" stroke="#f0f0f0" stroke-width="1.8"/><circle cx="0" cy="-4.8" r="1.1" fill="#f0f0f0"/><path d="M5 -10 q7 4 6 12 M7 -12 q9 5 8 15" fill="none" stroke="#999" stroke-width="0.9"/></g><g transform="translate(21.5,653)"><rect x="-11" y="-11" width="22" height="22" fill="#f4f4f4" stroke="#444" stroke-width="1.3"/><path d="M-11 -7.5 h22" stroke="#444" stroke-width="1.1"/><circle cx="0" cy="2" r="7" fill="#3d96c0"/><path d="M-4 -1 q3 -3 6 0 q-1 3 -4 3z M1 5 q2 -2 4 0" fill="#a8dcf0"/></g><g transform="translate(21,696.3)" fill="none" stroke="#555" stroke-width="1.3"><circle r="10"/><path d="M0 -7 v7 h-5"/><path d="M0 -10 v2 M0 10 v-2 M-10 0 h2 M10 0 h-2" stroke-width="1"/></g><g transform="translate(16,743)"><rect x="-5" y="-10" width="8" height="20" fill="url(#rb)"/><path d="M3 -6 l10 12" stroke="#111" stroke-width="2.4"/><path d="M3 -6 l2 2" stroke="#fff" stroke-width="2"/></g><g transform="translate(21.5,788)"><path d="M-11 -8 h6 l2 -3 h6 l2 3 h6 v19 h-22z" fill="#f8f8f8" stroke="#444" stroke-width="1.2"/><path d="M-6 -3 l12 11 M6 -3 l-12 11" stroke="#222" stroke-width="2.2"/><path d="M-8 -4 l4 -1 l1 4z M8 -4 l-4 -1 l-1 4z" fill="#222"/></g></svg>
<svg class="a" style="left:42px;top:196px" width="20" height="18"><path d="M2 10 q1 -6 6 -9 q3 0 3 3 l-2 4 l7 3 q0 4 -5 5 q-6 1 -9 -6z" fill="#8a8a8a" stroke="#555" stroke-width="0.8"/></svg>
<div class="t" style="left:61.8px;top:198.3px;font-size:14.0px;color:#222;font-weight:normal;transform:scaleX(0.995);transform-origin:0 0;">Part Navigator</div>
<div class="a" style="left:304.5px;top:201.0px;width:11.0px;height:8.5px;background:transparent;border:1.6px solid #222;border-top-width:2.4px"></div>
<div class="a" style="left:46.0px;top:219.0px;width:270.0px;height:25.0px;background:#ededed;"></div>
<div class="t" style="left:52.2px;top:225.1px;font-size:14.0px;color:#222;font-weight:normal;transform:scaleX(0.991);transform-origin:0 0;">Name</div>
<svg class="a" style="left:104px;top:226px" width="16" height="10"><path d="M2 8 h11 l-5.5 -6z" fill="#111"/></svg>
<div class="a" style="left:46.0px;top:266.1px;width:270.0px;height:22.4px;background:#f8f8f8;border-top:1px solid #f0f0f0;border-bottom:1px solid #f0f0f0"></div>
<div class="a" style="left:46.0px;top:310.9px;width:270.0px;height:22.4px;background:#f8f8f8;border-top:1px solid #f0f0f0;border-bottom:1px solid #f0f0f0"></div>
<div class="a" style="left:46.0px;top:355.9px;width:270.0px;height:22.4px;background:#f8f8f8;border-top:1px solid #f0f0f0;border-bottom:1px solid #f0f0f0"></div>
<div class="a" style="left:46.0px;top:400.8px;width:270.0px;height:22.4px;background:#f8f8f8;border-top:1px solid #f0f0f0;border-bottom:1px solid #f0f0f0"></div>
<div class="a" style="left:46.0px;top:445.6px;width:270.0px;height:22.4px;background:#f8f8f8;border-top:1px solid #f0f0f0;border-bottom:1px solid #f0f0f0"></div>
<div class="a" style="left:46.0px;top:490.5px;width:270.0px;height:22.4px;background:#f8f8f8;border-top:1px solid #f0f0f0;border-bottom:1px solid #f0f0f0"></div>
<div class="a" style="left:46.0px;top:535.4px;width:270.0px;height:22.4px;background:#f8f8f8;border-top:1px solid #f0f0f0;border-bottom:1px solid #f0f0f0"></div>
<div class="a" style="left:46.0px;top:580.4px;width:270.0px;height:22.4px;background:#f8f8f8;border-top:1px solid #f0f0f0;border-bottom:1px solid #f0f0f0"></div>
<div class="a" style="left:46.0px;top:625.2px;width:270.0px;height:22.4px;background:#f8f8f8;border-top:1px solid #f0f0f0;border-bottom:1px solid #f0f0f0"></div>
<div class="a" style="left:315.0px;top:219.0px;width:1.0px;height:453.0px;background:#e6e6e6;"></div>
<svg class="a" style="left:46px;top:243px" width="100" height="250"><g stroke="#c9c9c9" stroke-width="1" fill="none"><path d="M8.5 12 v68 M8.5 12 h9 M72 0"/><path d="M26.5 89 v148"/><path d="M26.5 106.0 h9"/><path d="M26.5 128.4 h9"/><path d="M26.5 150.9 h9"/><path d="M26.5 173.3 h9"/><path d="M26.5 195.8 h9"/><path d="M26.5 218.2 h9"/><path d="M26.5 240.7 h9"/><rect x="4.5" y="29.5" width="8" height="8" fill="#fff" stroke="#d8d8d8"/><rect x="4.5" y="52" width="8" height="8" fill="#fff" stroke="#d8d8d8"/><rect x="4.5" y="74.5" width="8" height="8" fill="#fff" stroke="#d8d8d8"/></g><g stroke="#333" stroke-width="1.2"><path d="M6 33.5 h5 M8.5 31 v5 M6 56 h5 M8.5 53.5 v5 M6 78.5 h5"/></g></svg>
<svg class="a" style="left:0;top:0" width="320" height="500"><circle cx="71" cy="254" r="6.8" fill="#fff" stroke="#444" stroke-width="1.3"/><path d="M71 250 v4.5 h-3" stroke="#444" stroke-width="1.3" fill="none"/><rect x="64.5" y="269.5" width="14" height="14" fill="#fff" stroke="#444" stroke-width="1.3"/><path d="M64.5 272.5 h14" stroke="#444"/><path d="M67 281 q1 -5 4 -6 q2 0 2 2 l4 2 q0 2 -3 2z" fill="#777"/><path d="M65 299 l4 4.5 l9 -10" fill="none" stroke="#3cc83c" stroke-width="2.2"/><path d="M80 298 l8 -4 l4 2 v8 l-8 3 l-4 -2z" fill="#e89850" stroke="#d07a30" stroke-width="0.8"/><rect x="83" y="298" width="5" height="5" fill="#777"/><defs><radialGradient id="gb" cx="0.35" cy="0.35" r="0.7"><stop offset="0" stop-color="#b8f5a8"/><stop offset="0.5" stop-color="#3cc83c"/><stop offset="1" stop-color="#1a8a1a"/></radialGradient></defs><circle cx="71" cy="321.5" r="6.5" fill="url(#gb)"/><rect x="80" y="315" width="13" height="13" fill="#eee" stroke="#999"/><rect x="82" y="317" width="6" height="6" fill="#fff" stroke="#555" stroke-width="0.8"/><rect x="85" y="320" width="7" height="7" fill="#f08a1c"/><ellipse cx="88" cy="344.2" rx="7" ry="4" fill="none" stroke="#666" stroke-width="1.1"/><circle cx="88" cy="344.2" r="2.4" fill="none" stroke="#666"/><path d="M82 350.2 l13 -11" stroke="#555" stroke-width="1.1"/><g stroke="#e07080" stroke-width="1.2" fill="none"><path d="M104 344.2 v-6 M104 344.2 l-6 4 M104 344.2 l6 4"/><circle cx="104" cy="338.2" r="2"/></g><ellipse cx="88" cy="366.4" rx="7" ry="4.2" fill="#fff" stroke="#555" stroke-width="1.2"/><circle cx="88" cy="366.4" r="2.5" fill="#333"/><path d="M98 368.4 l7 -4 l7 4 v3 l-7 4 l-7 -4z" fill="#c0c0c0" stroke="#555" stroke-width="0.9"/><path d="M100 367.4 l5 -3 l6 3 l-5 3z" fill="#e08a30"/><circle cx="101" cy="363.4" r="4.5" fill="#fff" stroke="#222" stroke-width="1.4"/><path d="M98.5 365.9 l5 -5" stroke="#222" stroke-width="1.2"/><ellipse cx="88" cy="388.8" rx="7" ry="4" fill="none" stroke="#666" stroke-width="1.1"/><circle cx="88" cy="388.8" r="2.4" fill="none" stroke="#666"/><path d="M82 394.8 l13 -11" stroke="#555" stroke-width="1.1"/><path d="M98 390.8 l7 -4 l7 4 v3 l-7 4 l-7 -4z" fill="#c0c0c0" stroke="#555" stroke-width="0.9"/><path d="M100 389.8 l5 -3 l6 3 l-5 3z" fill="#e08a30"/><circle cx="101" cy="385.8" r="4.5" fill="#fff" stroke="#222" stroke-width="1.4"/><path d="M98.5 388.3 l5 -5" stroke="#222" stroke-width="1.2"/><ellipse cx="88" cy="411.5" rx="7" ry="4" fill="none" stroke="#666" stroke-width="1.1"/><circle cx="88" cy="411.5" r="2.4" fill="none" stroke="#666"/><path d="M82 417.5 l13 -11" stroke="#555" stroke-width="1.1"/><path d="M98 413.5 l7 -4 l7 4 v3 l-7 4 l-7 -4z" fill="#c0c0c0" stroke="#555" stroke-width="0.9"/><path d="M100 412.5 l5 -3 l6 3 l-5 3z" fill="#e08a30"/><circle cx="101" cy="408.5" r="4.5" fill="#fff" stroke="#222" stroke-width="1.4"/><path d="M98.5 411.0 l5 -5" stroke="#222" stroke-width="1.2"/><ellipse cx="88" cy="433.8" rx="7" ry="4" fill="none" stroke="#666" stroke-width="1.1"/><circle cx="88" cy="433.8" r="2.4" fill="none" stroke="#666"/><path d="M82 439.8 l13 -11" stroke="#555" stroke-width="1.1"/><path d="M98 435.8 l7 -4 l7 4 v3 l-7 4 l-7 -4z" fill="#c0c0c0" stroke="#555" stroke-width="0.9"/><path d="M100 434.8 l5 -3 l6 3 l-5 3z" fill="#e08a30"/><circle cx="101" cy="430.8" r="4.5" fill="#fff" stroke="#222" stroke-width="1.4"/><path d="M98.5 433.3 l5 -5" stroke="#222" stroke-width="1.2"/><ellipse cx="88" cy="456.3" rx="7" ry="4" fill="none" stroke="#666" stroke-width="1.1"/><circle cx="88" cy="456.3" r="2.4" fill="none" stroke="#666"/><path d="M82 462.3 l13 -11" stroke="#555" stroke-width="1.1"/><path d="M97 460.3 v-4 l8 -4 l8 4 v4 l-8 4z" fill="#ddd" stroke="#555" stroke-width="0.9"/><path d="M97 455.3 l8 -5 l8 5 l-8 4z" fill="#5cc0e0" stroke="#2a8ab0" stroke-width="0.8"/><path d="M101 455.3 h8" stroke="#fff" stroke-width="1.2"/><ellipse cx="88" cy="478.5" rx="7" ry="4" fill="none" stroke="#666" stroke-width="1.1"/><circle cx="88" cy="478.5" r="2.4" fill="none" stroke="#666"/><path d="M82 484.5 l13 -11" stroke="#555" stroke-width="1.1"/><path d="M97 482.5 v-4 l8 -4 l8 4 v4 l-8 4z" fill="#ddd" stroke="#555" stroke-width="0.9"/><path d="M97 477.5 l8 -5 l8 5 l-8 4z" fill="#5cc0e0" stroke="#2a8ab0" stroke-width="0.8"/><path d="M101 477.5 h8" stroke="#fff" stroke-width="1.2"/></svg>
<div class="t" style="left:82.5px;top:247.1px;font-size:14.0px;color:#333;font-weight:normal;transform:scaleX(1.034);transform-origin:0 0;">History Modeling Mode</div>
<div class="t" style="left:82.1px;top:270.2px;font-size:14.0px;color:#333;font-weight:normal;transform:scaleX(0.999);transform-origin:0 0;">Model Views</div>
<div class="t" style="left:97.0px;top:292.7px;font-size:14.0px;color:#333;font-weight:normal;transform:scaleX(0.942);transform-origin:0 0;">Cameras</div>
<div class="t" style="left:97.0px;top:315.3px;font-size:14.0px;color:#333;font-weight:normal;transform:scaleX(1.028);transform-origin:0 0;">Model History</div>
<div class="t" style="left:114.9px;top:337.3px;font-size:14.0px;color:#bdbdbd;font-weight:normal;transform:scaleX(0.986);transform-origin:0 0;">Datum Coordinate System (0)</div>
<div class="t" style="left:114.9px;top:359.5px;font-size:14.0px;color:#333;font-weight:normal;transform:scaleX(0.973);transform-origin:0 0;">Body (1)</div>
<div class="t" style="left:114.9px;top:381.9px;font-size:14.0px;color:#bdbdbd;font-weight:normal;transform:scaleX(0.973);transform-origin:0 0;">Body (2)</div>
<div class="t" style="left:114.9px;top:404.6px;font-size:14.0px;color:#bdbdbd;font-weight:normal;transform:scaleX(0.973);transform-origin:0 0;">Body (3)</div>
<div class="t" style="left:114.9px;top:426.9px;font-size:14.0px;color:#bdbdbd;font-weight:normal;transform:scaleX(0.973);transform-origin:0 0;">Body (4)</div>
<div class="t" style="left:114.9px;top:449.4px;font-size:14.0px;color:#bdbdbd;font-weight:normal;transform:scaleX(0.968);transform-origin:0 0;">Extrude (5)</div>
<div class="t" style="left:114.9px;top:471.6px;font-size:14.0px;color:#a9a9a9;font-weight:bold;transform:scaleX(0.998);transform-origin:0 0;">Extrude (6)</div>
<div class="a" style="left:46.0px;top:671.3px;width:270.0px;height:18.0px;background:#f0f0f0;"></div>
<div class="a" style="left:65.7px;top:672.0px;width:91.5px;height:16.5px;background:#cdcdcd;"></div>
<svg class="a" style="left:46px;top:671px" width="270" height="19"><path d="M12 5 l-4 4.5 l4 4.5 M257 5 l4 4.5 l-4 4.5" fill="none" stroke="#444" stroke-width="1.4"/></svg>
<div class="a" style="left:45.2px;top:693.4px;width:272.0px;height:7.0px;background:#cfcfcf;border:1px solid #bdbdbd"></div>
<div class="t" style="left:72.9px;top:709.9px;font-size:15.5px;color:#2f7ea3;font-weight:normal;transform:scaleX(0.971);transform-origin:0 0;">Search</div>
<svg class="a" style="left:54px;top:710.5px" width="10" height="12"><path d="M2 1 l6 5 l-6 5z" fill="#1b5f80"/></svg>
<div class="t" style="left:72.9px;top:737.2px;font-size:15.5px;color:#2f7ea3;font-weight:normal;transform:scaleX(1.044);transform-origin:0 0;">Dependencies</div>
<svg class="a" style="left:54px;top:737.8px" width="10" height="12"><path d="M2 1 l6 5 l-6 5z" fill="#1b5f80"/></svg>
<div class="t" style="left:72.9px;top:764.4px;font-size:15.5px;color:#2f7ea3;font-weight:normal;transform:scaleX(1.055);transform-origin:0 0;">Details</div>
<svg class="a" style="left:54px;top:765.0px" width="10" height="12"><path d="M2 1 l6 5 l-6 5z" fill="#1b5f80"/></svg>
<div class="t" style="left:72.9px;top:791.5px;font-size:15.5px;color:#2f7ea3;font-weight:normal;transform:scaleX(1.025);transform-origin:0 0;">Preview</div>
<svg class="a" style="left:54px;top:792.1px" width="10" height="12"><path d="M2 1 l6 5 l-6 5z" fill="#1b5f80"/></svg>
<div class="a" style="left:45.0px;top:728.5px;width:272.0px;height:1.5px;background:#d4d4d4;"></div>
<div class="a" style="left:45.0px;top:755.5px;width:272.0px;height:1.5px;background:#d4d4d4;"></div>
<div class="a" style="left:45.0px;top:782.7px;width:272.0px;height:1.5px;background:#d4d4d4;"></div>
<div class="a" style="left:45.0px;top:809.9px;width:272.0px;height:1.5px;background:#d4d4d4;"></div>
<div class="a" style="left:325.5px;top:192.0px;width:1.0px;height:625.0px;background:#e2e2e2;"></div>
<svg class="a" style="left:334px;top:197px" width="16" height="16"><path d="M2 5 l6 -3 l6 3 v7 l-6 3 l-6 -3z" fill="#b9b9b9" stroke="#8a8a8a"/><path d="M2 5 l6 3 l6 -3 M8 8 v7" stroke="#eee" fill="none"/></svg>
<div class="t" style="left:352.7px;top:198.1px;font-size:14.0px;color:#e8f1f6;font-weight:normal;transform:scaleX(0.993);transform-origin:0 0;">Column.prt</div>
<svg class="a" style="left:426px;top:197px" width="30" height="16"><path d="M3 3 h7 v10 h-7z" fill="none" stroke="#e8f1f6" stroke-width="1.6"/><path d="M6 10 l6 -6" stroke="#e8f1f6" stroke-width="1.6"/><path d="M18 5 l6 6 M24 5 l-6 6" stroke="#dfe9ef" stroke-width="1.5"/></svg>
<svg class="a" style="left:336px;top:224px" width="16" height="16"><circle cx="8" cy="8" r="4.6" fill="none" stroke="#fff" stroke-width="3.2" stroke-dasharray="2 1.6"/><circle cx="8" cy="8" r="3.6" fill="none" stroke="#fff" stroke-width="1.6"/></svg>
<div class="t" style="left:359.5px;top:225.7px;font-size:16.0px;color:#e9f2f7;font-weight:normal;transform:scaleX(0.990);transform-origin:0 0;">Crossing Rebars</div>
<svg class="a" style="left:608px;top:222px" width="70" height="20"><path d="M9.5 4.5 A5.5 5.5 0 1 1 5.5 7" fill="none" stroke="#fff" stroke-width="2"/><path d="M3 4 l4 0 l-1 4z" fill="#fff"/><path d="M29 7 q0 -3.5 3.5 -3.5 q3.5 0 3.5 3.2 q0 2 -2.5 3 q-1 0.6 -1 2.3" fill="none" stroke="#fff" stroke-width="2"/><circle cx="32.5" cy="15.5" r="1.2" fill="#fff"/><path d="M51 4 l10.5 10.5 M61.5 4 l-10.5 10.5" stroke="#fff" stroke-width="2"/></svg>
<div class="a" style="left:327.0px;top:244.0px;width:1.5px;height:571.0px;background:#dadada;"></div>
<div class="a" style="left:680.0px;top:244.0px;width:1.0px;height:571.0px;background:#d6d6d6;"></div>
<div class="a" style="left:656.4px;top:252.0px;width:18.0px;height:502.0px;background:#efefef;"></div>
<div class="a" style="left:657.0px;top:268.5px;width:16.5px;height:219.0px;background:#c4c4c4;"></div>
<svg class="a" style="left:656px;top:250px" width="20" height="505"><path d="M5 11 l4.5 -4.5 l4.5 4.5" fill="none" stroke="#555" stroke-width="1.3"/><path d="M5 490 l4.5 4.5 l4.5 -4.5" fill="none" stroke="#555" stroke-width="1.3"/></svg>
<div class="a" style="left:339.6px;top:279.5px;width:311.4px;height:151.5px;background:#fff;box-shadow:0 1px 1px #e2e2e2"></div>
<div class="a" style="left:339.6px;top:434.0px;width:311.4px;height:123.7px;background:#fff;box-shadow:0 1px 1px #e2e2e2"></div>
<div class="a" style="left:339.6px;top:562.3px;width:311.4px;height:26.3px;background:#fff;box-shadow:0 1px 1px #e2e2e2"></div>
<div class="a" style="left:339.6px;top:591.8px;width:311.4px;height:94.2px;background:#fff;box-shadow:0 1px 1px #e2e2e2"></div>
<div class="a" style="left:339.6px;top:689.5px;width:311.4px;height:63.7px;background:#fff;box-shadow:0 1px 1px #e2e2e2"></div>
<div class="a" style="left:339.6px;top:253.2px;width:310.4px;height:26.0px;background:#fff;border:1px solid #8e8e8e"></div>
<div class="a" style="left:344.0px;top:263.0px;width:14.5px;height:8.0px;background:transparent;border:1.3px solid #4fc3cf"></div>
<div class="t" style="left:363.0px;top:259.9px;font-size:14.0px;color:#333;font-weight:normal;transform:scaleX(0.980);transform-origin:0 0;">Rectangular</div>
<svg class="a" style="left:630px;top:258px" width="16" height="16"><path d="M4.5 6.5 h8.5 l-4.25 4.25z" fill="#111"/></svg>
<div class="t" style="left:366.0px;top:285.2px;font-size:16.5px;color:#2f7ea3;font-weight:normal;transform:scaleX(0.983);transform-origin:0 0;">Position</div><svg class="a" style="left:346px;top:291.2px" width="14" height="10"><path d="M2 2 h9.5 l-4.75 5z" fill="#1b5f80"/></svg>
<div class="t" style="left:366.0px;top:440.1px;font-size:16.5px;color:#2f7ea3;font-weight:normal;transform:scaleX(0.968);transform-origin:0 0;">Limits</div><svg class="a" style="left:346px;top:446.1px" width="14" height="10"><path d="M2 2 h9.5 l-4.75 5z" fill="#1b5f80"/></svg>
<div class="t" style="left:366.0px;top:568.7px;font-size:16.5px;color:#2f7ea3;font-weight:normal;transform:scaleX(0.984);transform-origin:0 0;">Properties</div><svg class="a" style="left:348px;top:571.2px" width="10" height="14"><path d="M2 1.5 l5 4.75 l-5 4.75z" fill="#1b5f80"/></svg>
<div class="t" style="left:366.0px;top:597.4px;font-size:16.5px;color:#2f7ea3;font-weight:normal;transform:scaleX(0.935);transform-origin:0 0;">Size</div><svg class="a" style="left:346px;top:603.4px" width="14" height="10"><path d="M2 2 h9.5 l-4.75 5z" fill="#1b5f80"/></svg>
<div class="t" style="left:366.0px;top:696.0px;font-size:16.5px;color:#2f7ea3;font-weight:normal;transform:scaleX(1.090);transform-origin:0 0;">Distribution</div><svg class="a" style="left:346px;top:702.0px" width="14" height="10"><path d="M2 2 h9.5 l-4.75 5z" fill="#1b5f80"/></svg>
<div class="a" style="left:348.8px;top:344.1px;width:292.2px;height:29.3px;background:#fde07e;"></div>
<div class="a" style="left:589.0px;top:344.1px;width:2.0px;height:29.3px;background:#fff0c0;"></div>
<div class="a" style="left:620.0px;top:344.1px;width:2.0px;height:29.3px;background:#fff0c0;"></div>
<svg class="a" style="left:346px;top:318px" width="20" height="54"><path d="M3.5 9 l4 4.5 l9 -10" fill="none" stroke="#3ccc4a" stroke-width="2.2"/><path d="M3.5 40 l4 4.5 l9 -10" fill="none" stroke="#3ccc4a" stroke-width="2.2"/></svg>
<div class="t" style="left:368.0px;top:320.5px;font-size:14.0px;color:#333;font-weight:normal;transform:scaleX(0.943);transform-origin:0 0;">Select Start Face (1)</div>
<div class="t" style="left:368.0px;top:352.5px;font-size:14.0px;color:#222;font-weight:normal;transform:scaleX(0.968);transform-origin:0 0;">Specify Start Point</div>
<div class="t" style="left:349.2px;top:380.3px;font-size:14.0px;color:#333;font-weight:normal;transform:scaleX(0.971);transform-origin:0 0;">Reverse Direction</div>
<div class="a" style="left:350.3px;top:405.0px;width:15.0px;height:14.0px;background:#fff;border:1.3px solid #555"></div>
<div class="t" style="left:370.2px;top:404.9px;font-size:14.0px;color:#333;font-weight:normal;transform:scaleX(0.966);transform-origin:0 0;">Exclude Segment</div>
<div class="a" style="left:611.0px;top:312.3px;width:30.0px;height:29.3px;background:#fff;border:1px solid #9a9a9a"></div>
<svg class="a" style="left:611px;top:312px" width="30" height="30"><path d="M5 13 l10 -6 l10 6 v6 l-10 6 l-10 -6z" fill="#e8e8e8" stroke="#888" stroke-width="0.8"/><path d="M5 13 l10 -6 l10 6 l-10 6z" fill="#f28c28"/><path d="M15 19 v6 M5 19 l10 6" stroke="#c8c8c8" fill="none"/></svg>
<svg class="a" style="left:590px;top:344px" width="52" height="30"><circle cx="8" cy="9" r="2" fill="#e0782a"/><path d="M22 7 l-7 9 h5 l-4 8 l9 -10 h-5 l3 -7z" fill="#f5c030" stroke="#8a6a20" stroke-width="0.8"/><path d="M38 13.5 h7 l-3.5 3.5z" fill="#222"/></svg>
<div class="a" style="left:618.0px;top:375.5px;width:23.0px;height:22.5px;background:#fff;border:1px solid #8e8e8e"></div>
<svg class="a" style="left:618px;top:375px" width="24" height="24"><path d="M5 5 l14 14 M19 5 l-14 14" stroke="#444" stroke-width="1.3"/><path d="M5 5 l4 0 M5 5 l0 4 M19 19 l-4 0 M19 19 l0 -4" stroke="#444" stroke-width="1.3"/></svg>
<div class="t" style="left:348.6px;top:474.0px;font-size:14.0px;color:#333;font-weight:normal;transform:scaleX(1.015);transform-origin:0 0;">Start</div>
<div class="a" style="left:494.5px;top:468.0px;width:146.0px;height:25.0px;background:#fff;border:1px solid #8e8e8e"></div><svg class="a" style="left:620px;top:468.0px" width="20" height="25"><path d="M6 10.5 h8 l-4 4z" fill="#111"/></svg><svg class="a" style="left:496px;top:468.0px" width="20" height="25"><path d="M4.5 6 v12 M4.5 12 h10 M11.5 9 l3 3 l-3 3" fill="none" stroke="#444" stroke-width="1.1"/></svg><div class="t" style="left:516.8px;top:474.6px;font-size:14.0px;color:#333;font-weight:normal;transform:scaleX(1.007);transform-origin:0 0;">Value</div>
<div class="t" style="left:348.6px;top:501.7px;font-size:14.0px;color:#333;font-weight:normal;transform:scaleX(0.973);transform-origin:0 0;">Distance</div>
<div class="a" style="left:494.5px;top:496.4px;width:146.0px;height:25.0px;background:#fff;border:1px solid #8e8e8e"></div><svg class="a" style="left:620px;top:496.4px" width="20" height="25"><path d="M6 10.5 h8 l-4 4z" fill="#111"/></svg><div class="t" style="left:501.0px;top:502.5px;font-size:14.0px;color:#333;font-weight:normal;">0</div><div class="t" style="left:587.3px;top:503.0px;font-size:14.0px;color:#333;font-weight:normal;transform:scaleX(1.008);transform-origin:0 0;">mm</div>
<div class="t" style="left:348.6px;top:529.9px;font-size:14.0px;color:#333;font-weight:normal;transform:scaleX(0.923);transform-origin:0 0;">End</div>
<div class="a" style="left:494.5px;top:524.5px;width:146.0px;height:25.0px;background:#fff;border:1px solid #8e8e8e"></div><svg class="a" style="left:620px;top:524.5px" width="20" height="25"><path d="M6 10.5 h8 l-4 4z" fill="#111"/></svg><svg class="a" style="left:496px;top:524.5px" width="20" height="25"><path d="M3 12 h6 M8 6 v13 h7 v-13" fill="none" stroke="#444" stroke-width="1.1"/><path d="M6 10 l2 2 l-2 2" fill="none" stroke="#444"/></svg><div class="t" style="left:516.8px;top:531.1px;font-size:14.0px;color:#333;font-weight:normal;transform:scaleX(1.022);transform-origin:0 0;">Until Next</div>
<div class="t" style="left:348.6px;top:629.9px;font-size:14.0px;color:#333;font-weight:normal;transform:scaleX(1.021);transform-origin:0 0;">Diameter</div>
<div class="a" style="left:494.5px;top:624.5px;width:146.0px;height:25.0px;background:#fff;border:1px solid #8e8e8e"></div><svg class="a" style="left:620px;top:624.5px" width="20" height="25"><path d="M6 10.5 h8 l-4 4z" fill="#111"/></svg><div class="t" style="left:501.0px;top:630.6px;font-size:14.0px;color:#333;font-weight:normal;">16</div><div class="t" style="left:587.3px;top:631.1px;font-size:14.0px;color:#333;font-weight:normal;transform:scaleX(1.008);transform-origin:0 0;">mm</div>
<div class="t" style="left:348.6px;top:658.1px;font-size:14.0px;color:#333;font-weight:normal;transform:scaleX(0.975);transform-origin:0 0;">Bending Radius</div>
<div class="a" style="left:494.5px;top:653.2px;width:146.0px;height:25.0px;background:#fff;border:1px solid #8e8e8e"></div><svg class="a" style="left:620px;top:653.2px" width="20" height="25"><path d="M6 10.5 h8 l-4 4z" fill="#111"/></svg><div class="t" style="left:501.0px;top:659.3px;font-size:14.0px;color:#333;font-weight:normal;">50</div><div class="t" style="left:587.3px;top:659.8px;font-size:14.0px;color:#333;font-weight:normal;transform:scaleX(1.008);transform-origin:0 0;">mm</div>
<div class="t" style="left:348.6px;top:729.0px;font-size:14.0px;color:#333;font-weight:normal;transform:scaleX(0.969);transform-origin:0 0;">Spacing</div>
<div class="a" style="left:494.5px;top:724.5px;width:146.0px;height:25.0px;background:#fff;border:1px solid #8e8e8e"></div><div class="t" style="left:498.6px;top:731.1px;font-size:14.0px;color:#333;font-weight:normal;transform:scaleX(0.946);transform-origin:0 0;">Exact Spacing, Flexi</div><svg class="a" style="left:620px;top:724.5px" width="20" height="25"><path d="M6 10.5 h8 l-4 4z" fill="#111"/></svg>
<div class="a" style="left:549.5px;top:752.2px;width:91.0px;height:2.0px;background:#b8b8b8;"></div>
<svg class="a" style="left:496px;top:756px" width="16" height="10"><path d="M2 8 h10 l-5 -5z" fill="#111"/></svg>
<div class="a" style="left:338.0px;top:769.0px;width:327.0px;height:1.0px;background:#dedede;"></div>
<svg class="a" style="left:459px;top:674px" width="14" height="20"><path d="M1.5 1.5 v14 l3.5 -3 l2.5 5.5 l2 -1 l-2.5 -5.5 h4.5z" fill="#fff" stroke="#333" stroke-width="1"/></svg>
<div class="a" style="left:448.2px;top:778.2px;width:68.6px;height:25.8px;background:#0a6a97;"></div>
<div class="t" style="left:462.0px;top:784.5px;font-size:14.0px;color:#ffffff;font-weight:normal;transform:scaleX(0.947);transform-origin:0 0;">&lt; OK &gt;</div>
<div class="a" style="left:522.3px;top:778.2px;width:69.1px;height:25.8px;background:#fff;border:1.3px solid #2f7ea3"></div>
<div class="t" style="left:538.5px;top:784.5px;font-size:14.0px;color:#2f7ea3;font-weight:normal;transform:scaleX(1.028);transform-origin:0 0;">Apply</div>
<div class="a" style="left:595.9px;top:778.2px;width:69.6px;height:25.8px;background:#fff;border:1.3px solid #2f7ea3"></div>
<div class="t" style="left:610.5px;top:784.5px;font-size:14.0px;color:#2f7ea3;font-weight:normal;transform:scaleX(0.918);transform-origin:0 0;">Cancel</div>
<div class="a" style="left:3.0px;top:817.0px;width:1494.0px;height:1.0px;background:#d4d4d4;"></div>
<div class="t" style="left:6.0px;top:821.8px;font-size:13.5px;color:#222;font-weight:bold;transform:scaleX(0.979);transform-origin:0 0;">Select object to infer point</div>
<div class="t" style="left:676.0px;top:821.8px;font-size:13.5px;color:#222;font-weight:bold;transform:scaleX(0.959);transform-origin:0 0;">Associative endpoint specified</div>
<svg class="a" style="left:1348px;top:819px" width="16" height="18"><path d="M3 13 q1.5 -1.5 1.5 -5 q0 -5 3.5 -5.5 q3.5 0.5 3.5 5.5 q0 3.5 1.5 5z" fill="none" stroke="#444" stroke-width="1.1"/><path d="M6.5 14.5 q1.5 2 3 0 M8 2 v1.5" fill="none" stroke="#444"/></svg>
<div class="t" style="left:1369.0px;top:821.8px;font-size:13.5px;color:#444;font-weight:normal;transform:scaleX(0.980);transform-origin:0 0;">1 Notification</div>
<div class="a" style="left:767.5px;top:219.0px;width:287.0px;height:36.0px;background:#fff;"></div>
<div class="a" style="left:782.8px;top:228.0px;width:169.4px;height:23.5px;background:#f6f6f6;border:1px solid #cfcfcf"></div>
<div class="t" style="left:786.6px;top:234.2px;font-size:13.0px;color:#a8a8a8;font-weight:normal;transform:scaleX(0.950);transform-origin:0 0;">Tangent Faces</div>
<svg class="a" style="left:930px;top:228px" width="130" height="28">
<path d="M9.5 10 h7 l-3.5 3.5z" fill="#b0b0b0"/>
<circle cx="36.5" cy="11.5" r="1.1" fill="#aaa"/><circle cx="42.5" cy="11.5" r="1.1" fill="#aaa"/><circle cx="48.5" cy="11.5" r="1.1" fill="#aaa"/>
<circle cx="71.4" cy="11.8" r="8.3" fill="none" stroke="#555" stroke-width="1.6"/>
<path d="M71.4 1.5 v4 M71.4 18 v4 M61 11.8 h4 M78 11.8 h4" stroke="#555" stroke-width="1.6"/>
<circle cx="71.4" cy="11.8" r="3" fill="#f39a2a"/>
<path d="M88.5 9.5 h6 l-3 3z" fill="#111"/>
<line x1="106.5" y1="0" x2="106.5" y2="24" stroke="#e8e8e8"/>
<path d="M112 13.5 h6.5 l-3.25 3.25z" fill="#111"/>
</svg>
</body></html>
